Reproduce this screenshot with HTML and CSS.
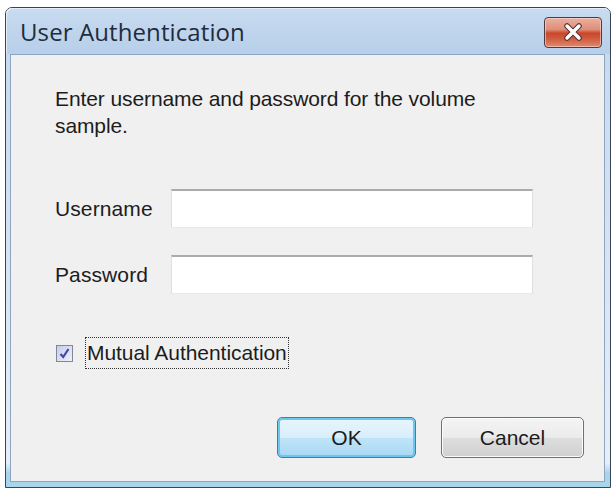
FILE: index.html
```html
<!DOCTYPE html>
<html>
<head>
<meta charset="utf-8">
<link rel="stylesheet" href="styles.css">
</head>
<body>
<div class="window">
  <div class="titlebar">
    <span class="title">User Authentication</span>
    <button class="close" aria-label="Close">
      <svg width="22" height="18" viewBox="0 0 22 18"><path d="M5 3 L17 15 M17 3 L5 15" stroke="#5a3030" stroke-width="5.5" stroke-linecap="round"/><path d="M5 3 L17 15 M17 3 L5 15" stroke="#fff" stroke-width="3.4" stroke-linecap="round"/></svg>
    </button>
  </div>
  <div class="content">
    <p class="intro">Enter username and password for the volume<br>sample.</p>
    <div class="form">
      <label class="lbl">Username</label>
      <div class="field"></div>
      <label class="lbl">Password</label>
      <div class="field"></div>
    </div>
    <div class="check-row">
      <span class="checkbox">
        <svg width="13" height="13" viewBox="0 0 13 13"><path d="M2.5 7 L5.2 10 L10.5 2" fill="none" stroke="#3d4aa8" stroke-width="2.2"/></svg>
      </span>
      <span class="check-label">Mutual Authentication</span>
    </div>
    <div class="buttons">
      <button class="btn btn-ok">OK</button>
      <button class="btn btn-cancel">Cancel</button>
    </div>
  </div>
</div>
</body>
</html>
```
FILE: styles.css
```css
html, body {
  margin: 0;
  padding: 0;
  background: #ffffff;
  width: 615px;
  height: 490px;
  overflow: hidden;
}
body {
  padding: 7px 4px 2px 5px;
  box-sizing: border-box;
  font-family: "Liberation Sans", Arial, sans-serif;
}
.window {
  height: 481px;
  border: 1px solid #3a4452;
  border-radius: 7px 7px 0 0;
  background: linear-gradient(#c4d8ee 0%, #d8e6f4 60%, #e6eef7 95%, #a9d5ec 97%);
  display: flex;
  flex-direction: column;
  box-sizing: border-box;
  padding: 0 5px 5px 4px;
}
.titlebar {
  height: 46px;
  display: flex;
  align-items: center;
  justify-content: space-between;
  background: linear-gradient(#c8dbf0, #b7cfe9);
  margin: 0 -5px 0 -4px;
  padding: 0 8px 0 14px;
  border-radius: 6px 6px 0 0;
  box-shadow: inset 1px 1px 0 #e4edf8;
}
.title {
  font-family: "Open Sans", "Liberation Sans", sans-serif;
  font-size: 24px;
  color: #1f2c3d;
  letter-spacing: 0.1px;
  margin-top: 1px;
}
.close {
  width: 58px;
  height: 31px;
  margin-top: 2px;
  border: 1px solid #4e3a40;
  border-radius: 4px;
  background: linear-gradient(#eab0a0 0%, #de8e78 40%, #c9472c 52%, #cf5a3e 70%, #e08a70 100%);
  display: flex;
  align-items: center;
  justify-content: center;
  padding: 0;
  box-shadow: inset 0 0 0 1px rgba(255,225,215,0.55);
}
.content {
  flex: 1;
  background: #f0f0f0;
  border: 1px solid #8fa5bf;
  padding: 30px 0 0 44px;
  display: flex;
  flex-direction: column;
}
.intro {
  margin: 0;
  font-size: 21px;
  line-height: 27px;
  color: #1c1c1c;
  letter-spacing: -0.1px;
}
.form {
  display: grid;
  grid-template-columns: 116px 362px;
  row-gap: 27px;
  align-items: center;
  margin-top: 50px;
}
.lbl {
  font-size: 21px;
  color: #1c1c1c;
  letter-spacing: 0.1px;
}
.field {
  height: 39px;
  background: #ffffff;
  border-top: 2px solid #ababab;
  border-left: 1px solid #e0e0e0;
  border-right: 1px solid #e0e0e0;
  border-bottom: 1px solid #e8e8e8;
  box-sizing: border-box;
}
.check-row {
  display: flex;
  align-items: center;
  margin-top: 44px;
  margin-left: 1px;
}
.checkbox {
  width: 17px;
  height: 17px;
  border: 1px solid #85859a;
  background: linear-gradient(135deg, #c8cdea, #eef0f8);
  box-sizing: border-box;
  display: flex;
  align-items: center;
  justify-content: center;
}
.check-label {
  margin-left: 13px;
  font-size: 21px;
  color: #1c1c1c;
  letter-spacing: -0.05px;
  padding: 3px 1px;
  outline: 1px dotted #333;
  outline-offset: 0;
}
.buttons {
  display: flex;
  justify-content: flex-end;
  gap: 25px;
  margin-top: 49px;
  padding-right: 20px;
}
.btn {
  width: 143px;
  height: 41px;
  border: 1px solid #707070;
  border-radius: 5px;
  background: linear-gradient(#f4f4f4 0%, #ebebeb 50%, #dddddd 52%, #d0d0d0 100%);
  font-family: "Liberation Sans", Arial, sans-serif;
  font-size: 21px;
  color: #1c1c1c;
  box-shadow: inset 0 0 0 1px #fbfbfb;
  padding: 0;
}
.btn-ok {
  width: 139px;
  border: 1px solid #3c7fb1;
  background: linear-gradient(#e8f5fc 0%, #d8eefb 50%, #bfe4f9 52%, #a8d8f4 100%);
  box-shadow: inset 0 0 0 2px #6cc7ee;
}
```
